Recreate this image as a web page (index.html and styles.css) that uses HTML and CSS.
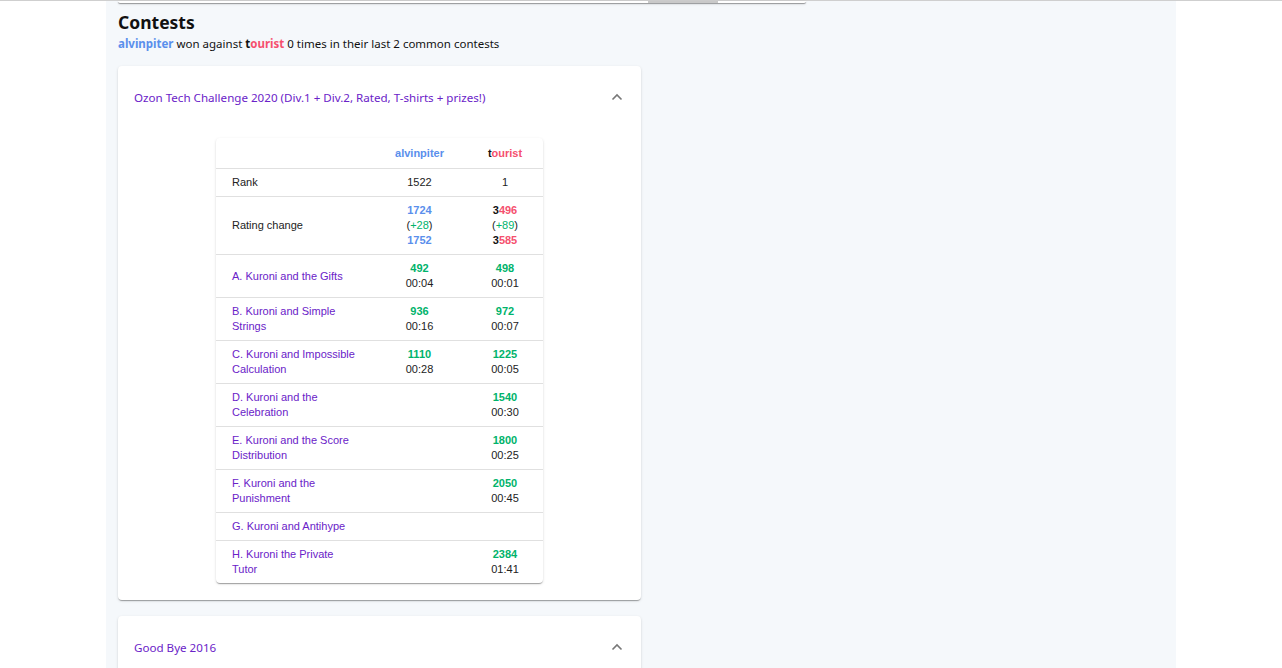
FILE: index.html
```html
<!DOCTYPE html>
<html>
<head>
<meta charset="utf-8">
<link rel="stylesheet" href="styles.css">
</head>
<body>
<div class="topline"></div>
<main class="main">
  <div class="prev-card"><div class="thumb"></div></div>
  <h2 class="title">Contests</h2>
  <p class="summary"><span class="blue b">alvinpiter</span> won against <span class="b"><span class="dark">t</span><span class="red">ourist</span></span> 0 times in their last 2 common contests</p>

  <section class="card">
    <div class="card-head">
      <span class="contest">Ozon Tech Challenge 2020 (Div.1 + Div.2, Rated, T-shirts + prizes!)</span>
      <svg class="chev" width="12" height="8" viewBox="0 0 12 8"><path d="M1.5 6.5 L6 2 L10.5 6.5" fill="none" stroke="#777" stroke-width="1.6"/></svg>
    </div>
    <div class="card-body">
      <table class="tbl">
        <colgroup><col class="c1"><col class="c2"><col class="c3"></colgroup>
        <thead>
          <tr><th></th><th class="blue">alvinpiter</th><th><span class="dark">t</span><span class="red">ourist</span></th></tr>
        </thead>
        <tbody>
          <tr><td>Rank</td><td class="num">1522</td><td class="num">1</td></tr>
          <tr><td>Rating change</td>
            <td class="num"><span class="blue b">1724</span><br>(<span class="green">+28</span>)<br><span class="blue b">1752</span></td>
            <td class="num"><span class="b"><span class="dark">3</span><span class="red">496</span></span><br>(<span class="green">+89</span>)<br><span class="b"><span class="dark">3</span><span class="red">585</span></span></td></tr>
          <tr><td class="prob">A. Kuroni and the Gifts</td><td class="num"><span class="score">492</span><br>00:04</td><td class="num"><span class="score">498</span><br>00:01</td></tr>
          <tr><td class="prob">B. Kuroni and Simple Strings</td><td class="num"><span class="score">936</span><br>00:16</td><td class="num"><span class="score">972</span><br>00:07</td></tr>
          <tr><td class="prob">C. Kuroni and Impossible Calculation</td><td class="num"><span class="score">1110</span><br>00:28</td><td class="num"><span class="score">1225</span><br>00:05</td></tr>
          <tr><td class="prob">D. Kuroni and the Celebration</td><td class="num"></td><td class="num"><span class="score">1540</span><br>00:30</td></tr>
          <tr><td class="prob">E. Kuroni and the Score Distribution</td><td class="num"></td><td class="num"><span class="score">1800</span><br>00:25</td></tr>
          <tr><td class="prob">F. Kuroni and the Punishment</td><td class="num"></td><td class="num"><span class="score">2050</span><br>00:45</td></tr>
          <tr><td class="prob">G. Kuroni and Antihype</td><td class="num"></td><td class="num"></td></tr>
          <tr><td class="prob">H. Kuroni the Private Tutor</td><td class="num"></td><td class="num"><span class="score">2384</span><br>01:41</td></tr>
        </tbody>
      </table>
    </div>
  </section>

  <section class="card card2">
    <div class="card-head">
      <span class="contest">Good Bye 2016</span>
      <svg class="chev" width="12" height="8" viewBox="0 0 12 8"><path d="M1.5 6.5 L6 2 L10.5 6.5" fill="none" stroke="#777" stroke-width="1.6"/></svg>
    </div>
  </section>
</main>
</body>
</html>
```

FILE: styles.css
```css
html, body { margin: 0; padding: 0; background: #fff; }
body { font-family: "Noto Sans", "Open Sans", sans-serif; color: #111; height: 668px; overflow: hidden; }
.topline { height: 1px; background: #cfcfcf; }
.main {
  margin-left: 106px;
  width: 1070px;
  box-sizing: border-box;
  padding: 0 12px;
  background: #f5f8fb;
  height: 667px;
}
.prev-card {
  width: 688px;
  height: 2px;
  background: #fff;
  border-radius: 0 0 4px 4px;
  box-shadow: 0 1px 1px rgba(0,0,0,0.35), 0 1px 3px rgba(0,0,0,0.12);
}
.thumb { margin-left: 530px; width: 70px; height: 2px; background: #c9c9c9; }
.title { margin: 8px 0 0; font-size: 17.5px; line-height: 22px; font-weight: 700; }
.summary { margin: 2px 0 0; font-size: 11.5px; line-height: 18px; }
.b { font-weight: 700; }
.blue { color: #5a8fec; }
.red { color: #f5506e; }
.dark { color: #111; }
.green { color: #00b36b; }

.card {
  width: 523px;
  margin-top: 13px;
  background: #fff;
  border-radius: 4px;
  box-shadow: 0 2px 1px -1px rgba(0,0,0,0.2), 0 1px 1px 0 rgba(0,0,0,0.14), 0 1px 3px 0 rgba(0,0,0,0.12);
}
.card2 { margin-top: 16px; }
.card-head {
  display: flex;
  align-items: center;
  justify-content: space-between;
  height: 62px;
  padding: 0 18px 0 16px;
}
.contest { color: #6a22c8; font-size: 11.6px; }
.card-body { padding: 10px 0 17px 98px; }
.tbl {
  width: 327px;
  table-layout: fixed;
  border-collapse: collapse;
  font-family: "Liberation Sans", Arial, sans-serif;
  font-size: 11px;
  line-height: 15px;
  color: #222;
  background: #fff;
  border-radius: 4px;
  box-shadow: 0 2px 1px -1px rgba(0,0,0,0.2), 0 1px 1px 0 rgba(0,0,0,0.14), 0 1px 3px 0 rgba(0,0,0,0.12);
}
.c1 { width: 156px; }
.c2 { width: 95px; }
.c3 { width: 76px; }
.tbl th { font-weight: 700; padding: 8px 16px 7px; text-align: center; border-bottom: 1px solid #e0e0e0; }
.tbl td { padding: 6px 16px; border-bottom: 1px solid #e0e0e0; vertical-align: middle; }
.tbl tbody tr:last-child td { border-bottom: none; }
.tbl td.num { text-align: center; }
.tbl td.prob { color: #6a22c8; }
.score { color: #00b36b; font-weight: 700; }
```
